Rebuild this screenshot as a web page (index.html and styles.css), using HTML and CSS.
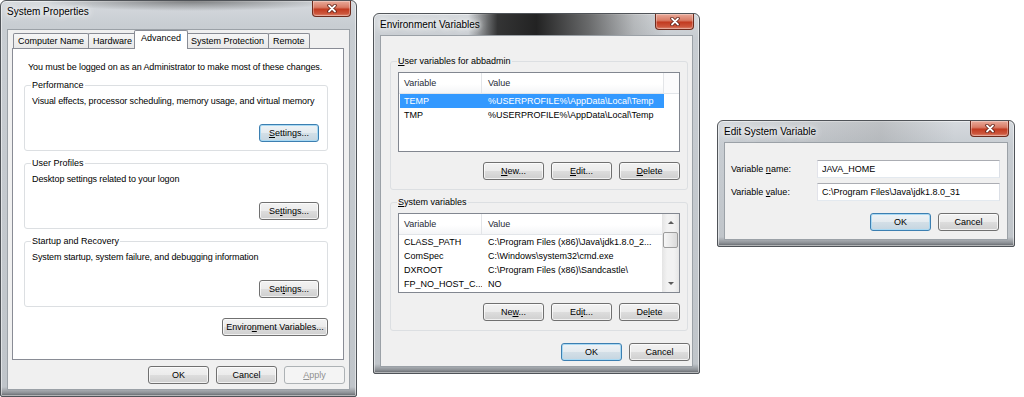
FILE: index.html
```html
<!DOCTYPE html>
<html lang="en">
<head>
    <meta charset="UTF-8">
    <title>System Properties - Environment Variables</title>
    <link rel="stylesheet" href="styles.css">
</head>
<body>
    <div class="desktop">
        <!-- System Properties dialog -->
        <div class="window sysprops">
            <div class="titlebar">
                <span class="title">System Properties</span>
                <span class="close">
                    <svg width="10" height="9" viewBox="0 0 10 9"><path d="M2 1.5l6 6M8 1.5l-6 6" stroke="#5a1a10" stroke-width="3.4" stroke-linecap="round"/><path d="M2 1.5l6 6M8 1.5l-6 6" stroke="#fff" stroke-width="1.8" stroke-linecap="round"/></svg>
                </span>
            </div>
            <div class="client">
                <div class="tabs">
                    <span class="tab">Computer Name</span>
                    <span class="tab">Hardware</span>
                    <span class="tab selected">Advanced</span>
                    <span class="tab">System Protection</span>
                    <span class="tab">Remote</span>
                </div>
                <div class="tab-panel">
                    <p class="note">You must be logged on as an Administrator to make most of these changes.</p>

                    <fieldset class="group">
                        <legend>Performance</legend>
                        <p>Visual effects, processor scheduling, memory usage, and virtual memory</p>
                        <div class="group-actions"><button class="btn settings default"><u>S</u>ettings...</button></div>
                    </fieldset>

                    <fieldset class="group">
                        <legend>User Profiles</legend>
                        <p>Desktop settings related to your logon</p>
                        <div class="group-actions"><button class="btn settings">Se<u>t</u>tings...</button></div>
                    </fieldset>

                    <fieldset class="group">
                        <legend>Startup and Recovery</legend>
                        <p>System startup, system failure, and debugging information</p>
                        <div class="group-actions"><button class="btn settings">Set<u>t</u>ings...</button></div>
                    </fieldset>

                    <div class="panel-actions"><button class="btn wide">Enviro<u>n</u>ment Variables...</button></div>
                </div>
                <div class="btn-row">
                    <button class="btn">OK</button>
                    <button class="btn">Cancel</button>
                    <button class="btn" disabled><u>A</u>pply</button>
                </div>
            </div>
        </div>

        <!-- Environment Variables dialog -->
        <div class="window envvars">
            <div class="titlebar">
                <span class="title">Environment Variables</span>
                <span class="close">
                    <svg width="10" height="9" viewBox="0 0 10 9"><path d="M2 1.5l6 6M8 1.5l-6 6" stroke="#5a1a10" stroke-width="3.4" stroke-linecap="round"/><path d="M2 1.5l6 6M8 1.5l-6 6" stroke="#fff" stroke-width="1.8" stroke-linecap="round"/></svg>
                </span>
            </div>
            <div class="client">
                <fieldset class="group">
                    <legend><u>U</u>ser variables for abbadmin</legend>
                    <div class="listview">
                        <div class="lv-main">
                            <div class="lv-header"><span>Variable</span><span>Value</span><span></span></div>
                            <div class="lv-row selected"><span>TEMP</span><span>%USERPROFILE%\AppData\Local\Temp</span></div>
                            <div class="lv-row"><span>TMP</span><span>%USERPROFILE%\AppData\Local\Temp</span></div>
                        </div>
                    </div>
                    <div class="btn-row">
                        <button class="btn"><u>N</u>ew...</button>
                        <button class="btn"><u>E</u>dit...</button>
                        <button class="btn"><u>D</u>elete</button>
                    </div>
                </fieldset>

                <fieldset class="group">
                    <legend><u>S</u>ystem variables</legend>
                    <div class="listview">
                        <div class="lv-main">
                            <div class="lv-header"><span>Variable</span><span>Value</span><span></span></div>
                            <div class="lv-row"><span>CLASS_PATH</span><span>C:\Program Files (x86)\Java\jdk1.8.0_2...</span></div>
                            <div class="lv-row"><span>ComSpec</span><span>C:\Windows\system32\cmd.exe</span></div>
                            <div class="lv-row"><span>DXROOT</span><span>C:\Program Files (x86)\Sandcastle\</span></div>
                            <div class="lv-row"><span>FP_NO_HOST_C...</span><span>NO</span></div>
                        </div>
                        <div class="scrollbar">
                            <span class="sb-arrow up"></span>
                            <span class="sb-thumb"></span>
                            <span class="sb-track"></span>
                            <span class="sb-arrow down"></span>
                        </div>
                    </div>
                    <div class="btn-row">
                        <button class="btn">Ne<u>w</u>...</button>
                        <button class="btn">Ed<u>i</u>t...</button>
                        <button class="btn">De<u>l</u>ete</button>
                    </div>
                </fieldset>

                <div class="btn-row dialog-buttons">
                    <button class="btn default">OK</button>
                    <button class="btn">Cancel</button>
                </div>
            </div>
        </div>

        <!-- Edit System Variable dialog -->
        <div class="window editvar">
            <div class="titlebar">
                <span class="title">Edit System Variable</span>
                <span class="close">
                    <svg width="10" height="9" viewBox="0 0 10 9"><path d="M2 1.5l6 6M8 1.5l-6 6" stroke="#5a1a10" stroke-width="3.4" stroke-linecap="round"/><path d="M2 1.5l6 6M8 1.5l-6 6" stroke="#fff" stroke-width="1.8" stroke-linecap="round"/></svg>
                </span>
            </div>
            <div class="client">
                <div class="field-row">
                    <label for="var-name">Variable <u>n</u>ame:</label>
                    <input type="text" id="var-name" class="textbox" value="JAVA_HOME">
                </div>
                <div class="field-row">
                    <label for="var-value">Variable <u>v</u>alue:</label>
                    <input type="text" id="var-value" class="textbox" value="C:\Program Files\Java\jdk1.8.0_31">
                </div>
                <div class="btn-row">
                    <button class="btn default">OK</button>
                    <button class="btn">Cancel</button>
                </div>
            </div>
        </div>
    </div>
</body>
</html>
```

FILE: styles.css
```css
body {
    margin: 0;
    background: #fff;
    font-family: "Liberation Sans", Arial, sans-serif;
    font-size: 9px;
    color: #000;
}

.desktop {
    display: flex;
    align-items: flex-start;
}

/* Window frame (Win7 glass, greyish) */
.window {
    box-sizing: border-box;
    border: 1px solid #4f5358;
    border-radius: 6px 6px 2px 2px;
    padding: 0 7px 7px;
    background: linear-gradient(180deg, #d6dade 0, #c8cdd2 24px, #c0c5ca calc(100% - 9px), #8d9196 calc(100% - 3px), #5e6267 100%);
    box-shadow: inset 0 0 0 1px rgba(255, 255, 255, 0.5);
}

.sysprops {
    width: 357px;
}

.envvars {
    width: 327px;
    margin: 13px 0 0 16px;
}

.editvar {
    width: 298px;
    margin: 120px 0 0 17px;
}

.titlebar {
    height: 22px;
    margin: 0 -7px;
    padding: 0 5px 0 6px;
    display: flex;
    justify-content: space-between;
    align-items: flex-start;
}

.sysprops .titlebar {
    background: radial-gradient(ellipse 150px 10px at 190px 0, rgba(50, 50, 50, 0.55), transparent);
}

.envvars .titlebar {
    background: linear-gradient(90deg, transparent 0, transparent 29%, rgba(35, 35, 35, 0.9) 38%, rgba(25, 25, 25, 0.95) 50%, rgba(70, 70, 70, 0.75) 66%, rgba(130, 130, 130, 0.35) 80%, transparent 90%);
}

.editvar .titlebar {
    background: linear-gradient(90deg, transparent 0, rgba(120, 120, 120, 0.25) 55%, transparent 80%);
}

.title {
    font-size: 10px;
    line-height: 22px;
    padding: 0 2px;
    margin-left: -2px;
    text-shadow: 0 0 4px #fff, 0 0 8px #fff, 0 0 10px #fff;
}

.close {
    box-sizing: border-box;
    width: 39px;
    height: 16px;
    display: flex;
    align-items: center;
    justify-content: center;
    border: 1px solid #6e2b1d;
    border-top: 0;
    border-radius: 0 0 4px 4px;
    background: linear-gradient(180deg, #e9aa9a 0%, #d97c66 42%, #c23b21 55%, #cd573d 85%, #e0907b 100%);
    box-shadow: inset 0 0 0 1px rgba(255, 255, 255, 0.3);
}

.client {
    background: #f0f0f0;
    box-shadow: 0 0 0 1px #9ba1a7;
}

.sysprops .client {
    padding: 0 0 5px;
}

.envvars .client {
    padding: 19px 2px 5px 9px;
}

.editvar .client {
    padding: 17px 7px 8px 6px;
}

/* Buttons */
.btn {
    box-sizing: border-box;
    width: 61px;
    height: 18px;
    padding: 0;
    font: inherit;
    color: #000;
    border: 1px solid #707070;
    border-radius: 3px;
    background: linear-gradient(180deg, #f2f2f2 0%, #ebebeb 50%, #dddddd 51%, #cfcfcf 100%);
    box-shadow: inset 0 0 0 1px rgba(255, 255, 255, 0.7);
}

.btn.default {
    border-color: #3c7fb1;
    background: linear-gradient(180deg, #eef3f6 0%, #e3eaef 50%, #d3dfe7 51%, #c5d5e0 100%);
    box-shadow: inset 0 0 0 1px #a9d9f3;
}

.btn:disabled {
    color: #8f8f8f;
    border-color: #adb2b5;
    background: #f4f4f4;
    box-shadow: none;
}

.btn.settings {
    width: 60px;
}

.btn.wide {
    width: 106px;
}

.btn-row {
    display: flex;
    justify-content: flex-end;
    gap: 7px;
}

/* Tabs */
.tabs {
    display: flex;
    align-items: flex-end;
    height: 18px;
    margin: 7px 0 0 5px;
}

.tab {
    box-sizing: border-box;
    height: 15px;
    padding: 0 4px;
    line-height: 14px;
    border: 1px solid #898c95;
    border-bottom: 0;
    margin-right: -1px;
    border-radius: 2px 2px 0 0;
    background: linear-gradient(180deg, #f6f6f6, #e8e8e8);
}

.tab.selected {
    position: relative;
    z-index: 1;
    height: 19px;
    margin: 0 -2px -1px -2px;
    padding: 0 6px;
    line-height: 15px;
    background: #fff;
}

.tab-panel {
    box-sizing: border-box;
    width: 332px;
    height: 312px;
    margin-left: 4px;
    padding: 12px 15px 0 11px;
    border: 1px solid #898c95;
    background: #fff;
}

.note {
    margin: 0 0 0 4px;
    line-height: 12px;
    white-space: nowrap;
    letter-spacing: -0.1px;
}

/* Group boxes */
.group {
    box-sizing: border-box;
    min-width: 0;
    margin: 6px 0 0;
    padding: 4px 8px 8px 7px;
    border: 1px solid #dcdfe2;
    border-radius: 3px;
}

.group legend {
    padding: 0 1px;
    margin-left: -1px;
    line-height: 12px;
}

.group p {
    margin: 0;
    line-height: 12px;
    white-space: nowrap;
    letter-spacing: -0.1px;
}

.group-actions {
    display: flex;
    justify-content: flex-end;
    margin-top: 17px;
}

.panel-actions {
    display: flex;
    justify-content: flex-end;
    margin-top: 11px;
}

.sysprops .btn-row {
    margin-top: 6px;
    padding-right: 4px;
}

.envvars .group {
    width: 298px;
    padding: 5px 7px 9px 7px;
}

.envvars .group:first-child {
    margin-top: 0;
}

.envvars .group .btn-row {
    margin-top: 10px;
}

.envvars .dialog-buttons {
    margin-top: 12px;
}

/* List view */
.listview {
    box-sizing: border-box;
    height: 80px;
    display: flex;
    overflow: hidden;
    border: 1px solid #828790;
    background: #fff;
}

.lv-main {
    flex: 1;
    min-width: 0;
    overflow: hidden;
}

.lv-header {
    display: grid;
    grid-template-columns: 83px 182px 1fr;
    height: 21px;
    line-height: 20px;
    color: #1e2a36;
    background: linear-gradient(180deg, #fff 0%, #fff 55%, #f4f5f7 100%);
    border-bottom: 1px solid #e2e5e9;
    box-sizing: border-box;
}

.lv-header span {
    box-sizing: border-box;
    padding-left: 5px;
    border-right: 1px solid #e3e5e8;
    white-space: nowrap;
}

.lv-header span:nth-child(2) {
    padding-left: 6px;
}

.lv-header span:last-child {
    border-right: 0;
    background: #fbfbfc;
}

.lv-row {
    display: grid;
    grid-template-columns: 82px 182px;
    width: 264px;
    height: 14px;
    margin-left: 1px;
    line-height: 14px;
    white-space: nowrap;
}

.lv-row span {
    overflow: hidden;
    padding-left: 4px;
}

.lv-row span:nth-child(2) {
    padding-left: 6px;
}

.lv-row.selected {
    background: #3399ff;
    color: #fff;
}

/* Scroll bar */
.scrollbar {
    width: 17px;
    flex: none;
    display: flex;
    flex-direction: column;
    background: linear-gradient(90deg, #e4e4e4, #f2f2f2 30%, #f2f2f2 70%, #e6e6e6);
}

.sb-arrow {
    height: 17px;
    flex: none;
    display: flex;
    align-items: center;
    justify-content: center;
}

.sb-arrow::before {
    content: "";
    border-left: 3px solid transparent;
    border-right: 3px solid transparent;
}

.sb-arrow.up::before {
    border-bottom: 3px solid #5b5b5b;
}

.sb-arrow.down::before {
    border-top: 3px solid #5b5b5b;
}

.sb-thumb {
    box-sizing: border-box;
    height: 16px;
    margin: 1px 1px 0;
    flex: none;
    border: 1px solid #9c9c9c;
    border-radius: 2px;
    background: linear-gradient(90deg, #f6f6f6, #e9e9e9 50%, #dadada);
}

.sb-track {
    flex: 1;
}

/* Edit fields */
.field-row {
    display: flex;
    align-items: center;
    height: 18px;
}

.field-row + .field-row {
    margin-top: 5px;
}

.field-row label {
    width: 86px;
}

.textbox {
    box-sizing: border-box;
    width: 183px;
    height: 18px;
    margin: 0;
    padding: 0 4px;
    font: inherit;
    color: #000;
    background: #fff;
    border: 1px solid;
    border-color: #abadb3 #dbdfe6 #e3e9ef #e2e3ea;
    outline: none;
}

.editvar .btn-row {
    margin-top: 12px;
    padding-right: 1px;
}
```
